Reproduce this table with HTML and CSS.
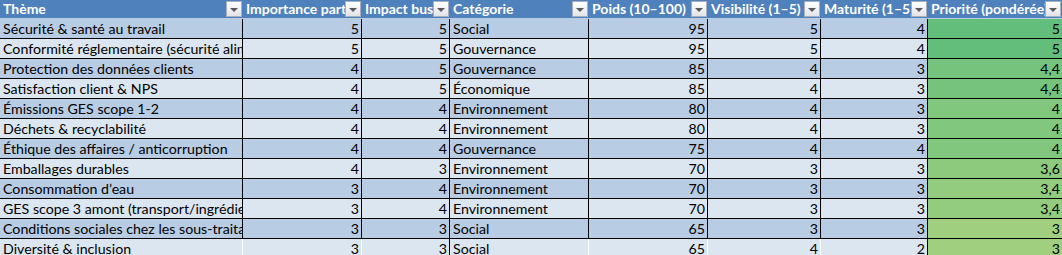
FILE: index.html
```html
<!DOCTYPE html>
<html lang="fr">
<head>
<meta charset="utf-8">
<title>Matrice de matérialité</title>
<link rel="stylesheet" href="styles.css">
</head>
<body>
<div class="sheet">
  <div class="row head">
    <div class="hc"><span class="ht">Thème</span><span class="dd"></span></div>
    <div class="hc"><span class="ht">Importance parties prenantes</span><span class="dd"></span></div>
    <div class="hc"><span class="ht">Impact business</span><span class="dd"></span></div>
    <div class="hc"><span class="ht">Catégorie</span><span class="dd"></span></div>
    <div class="hc"><span class="ht">Poids (10–100)</span><span class="dd"></span></div>
    <div class="hc"><span class="ht">Visibilité (1–5)</span><span class="dd"></span></div>
    <div class="hc"><span class="ht">Maturité (1–5)</span><span class="dd"></span></div>
    <div class="hc"><span class="ht">Priorité (pondérée)</span><span class="dd"></span></div>
  </div>

  <div class="row dark">
    <div class="c t">Sécurité &amp; santé au travail</div><div class="c n">5</div><div class="c n">5</div><div class="c t">Social</div><div class="c n">95</div><div class="c n">5</div><div class="c n">4</div><div class="c n p g50">5</div>
  </div>
  <div class="row light">
    <div class="c t">Conformité réglementaire (sécurité alimentaire)</div><div class="c n">5</div><div class="c n">5</div><div class="c t">Gouvernance</div><div class="c n">95</div><div class="c n">5</div><div class="c n">4</div><div class="c n p g50">5</div>
  </div>
  <div class="row dark">
    <div class="c t">Protection des données clients</div><div class="c n">4</div><div class="c n">5</div><div class="c t">Gouvernance</div><div class="c n">85</div><div class="c n">4</div><div class="c n">3</div><div class="c n p g44">4,4</div>
  </div>
  <div class="row light">
    <div class="c t">Satisfaction client &amp; NPS</div><div class="c n">4</div><div class="c n">5</div><div class="c t">Économique</div><div class="c n">85</div><div class="c n">4</div><div class="c n">3</div><div class="c n p g44">4,4</div>
  </div>
  <div class="row dark">
    <div class="c t">Émissions GES scope 1-2</div><div class="c n">4</div><div class="c n">4</div><div class="c t">Environnement</div><div class="c n">80</div><div class="c n">4</div><div class="c n">3</div><div class="c n p g40">4</div>
  </div>
  <div class="row light">
    <div class="c t">Déchets &amp; recyclabilité</div><div class="c n">4</div><div class="c n">4</div><div class="c t">Environnement</div><div class="c n">80</div><div class="c n">4</div><div class="c n">3</div><div class="c n p g40">4</div>
  </div>
  <div class="row dark">
    <div class="c t">Éthique des affaires / anticorruption</div><div class="c n">4</div><div class="c n">4</div><div class="c t">Gouvernance</div><div class="c n">75</div><div class="c n">4</div><div class="c n">4</div><div class="c n p g40">4</div>
  </div>
  <div class="row light">
    <div class="c t">Emballages durables</div><div class="c n">4</div><div class="c n">3</div><div class="c t">Environnement</div><div class="c n">70</div><div class="c n">3</div><div class="c n">3</div><div class="c n p g36">3,6</div>
  </div>
  <div class="row dark">
    <div class="c t">Consommation d’eau</div><div class="c n">3</div><div class="c n">4</div><div class="c t">Environnement</div><div class="c n">70</div><div class="c n">3</div><div class="c n">3</div><div class="c n p g34">3,4</div>
  </div>
  <div class="row light">
    <div class="c t">GES scope 3 amont (transport/ingrédients)</div><div class="c n">3</div><div class="c n">4</div><div class="c t">Environnement</div><div class="c n">70</div><div class="c n">3</div><div class="c n">3</div><div class="c n p g34">3,4</div>
  </div>
  <div class="row dark">
    <div class="c t">Conditions sociales chez les sous-traitants</div><div class="c n">3</div><div class="c n">3</div><div class="c t">Social</div><div class="c n">65</div><div class="c n">3</div><div class="c n">3</div><div class="c n p g30">3</div>
  </div>
  <div class="row light last">
    <div class="c t">Diversité &amp; inclusion</div><div class="c n">3</div><div class="c n">3</div><div class="c t">Social</div><div class="c n">65</div><div class="c n">4</div><div class="c n">2</div><div class="c n p g30">3</div>
  </div>
</div>
</body>
</html>
```

FILE: styles.css
```css
html, body {
  margin: 0;
  padding: 0;
  background: #ffffff;
}

body {
  font-family: "Lato", "Liberation Sans", sans-serif;
  font-size: 14.2px;
  color: #000000;
  overflow: hidden;
}

.sheet {
  display: flex;
  flex-direction: column;
  width: 1062px;
}

.row {
  display: grid;
  grid-template-columns: 243px 119px 88px 139px 119px 113px 107px 134px;
  height: 20px;
}

.row.head {
  height: 19px;
  background: #4f81bd;
  border-bottom: 1px solid #b8cce4;
  box-sizing: border-box;
}

.hc {
  display: flex;
  align-items: center;
  min-width: 0;
  overflow: hidden;
  padding-left: 3px;
}

.ht {
  flex: 1 1 auto;
  min-width: 0;
  overflow: hidden;
  white-space: nowrap;
  color: #ffffff;
  font-weight: bold;
  font-size: 14px;
  line-height: 18px;
}

.dd {
  flex: 0 0 auto;
  width: 16px;
  height: 16px;
  margin-right: 1px;
  box-sizing: border-box;
  border: 1px solid #a7b0bc;
  background: linear-gradient(#ffffff, #e2e4e8);
  display: flex;
  align-items: center;
  justify-content: center;
}

.dd::after {
  content: "";
  width: 0;
  height: 0;
  margin-top: 2px;
  border-left: 4px solid transparent;
  border-right: 4px solid transparent;
  border-top: 4px solid #5a5a5a;
}

.c {
  box-sizing: border-box;
  border-right: 1px solid #000000;
  border-bottom: 1px solid #000000;
  padding: 0 3px;
  line-height: 19px;
  white-space: nowrap;
  overflow: hidden;
  min-width: 0;
}

.c.n {
  text-align: right;
  padding-right: 2px;
}

.c.t {
  text-align: left;
}

.row.dark .c { background: #b8cce4; }
.row.light .c { background: #dce6f1; }

.row.last .c {
  border-right-color: #ffffff;
  border-bottom: none;
}

.row.last .c.n:nth-child(3),
.row.last .c.n:nth-child(7) {
  border-right-color: #000000;
}

.row .c.p { border-right: none; }

.row .c.g50 { background: #63be7b; }
.row .c.g44 { background: #75c37c; }
.row .c.g40 { background: #81c77d; }
.row .c.g36 { background: #8dca7e; }
.row .c.g34 { background: #93cc7e; }
.row .c.g30 { background: #a0d07f; }
```
